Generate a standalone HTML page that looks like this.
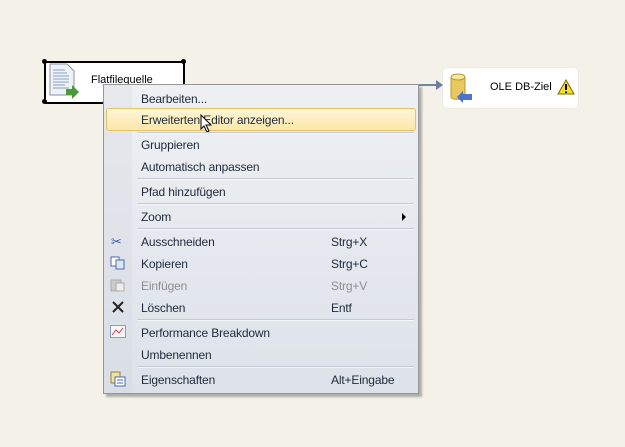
<!DOCTYPE html>
<html><head><style>
body{margin:0;width:625px;height:447px;background:#f4f1e9;position:relative;overflow:hidden;font-family:"Liberation Sans","DejaVu Sans",sans-serif;}
.box{position:absolute;background:#fff;border-radius:4px;}
.dot{position:absolute;width:5px;height:5px;border-radius:50%;background:#000;}
#menu{position:absolute;left:103px;top:84px;width:314px;height:308px;border:1px solid #979797;background:linear-gradient(#eef0f3,#dde2ea);box-shadow:3px 3px 2px rgba(0,0,0,0.28);}
#gut{position:absolute;left:0;top:0;width:28px;height:100%;background:linear-gradient(#e6e8ec,#d9dee6);}
.it{position:absolute;left:37px;font-size:12px;color:#1e2a3a;line-height:14px;letter-spacing:-0.15px;}
.sc{position:absolute;left:227px;font-size:12px;color:#1e2a3a;line-height:14px;letter-spacing:-0.15px;}
.sep{position:absolute;left:33px;width:277px;height:1px;background:#c5cad3;border-bottom:1px solid #f4f5f7;}
.ic{position:absolute;left:7px;font-size:13px;line-height:14px;}
</style></head><body>
<div class="box" style="left:44px;top:61px;width:137px;height:39px;border:2px solid #000;border-radius:2px;"></div>
<div class="dot" style="left:42px;top:59px"></div><div class="dot" style="left:181px;top:59px"></div>
<div class="dot" style="left:42px;top:99px"></div>
<svg style="position:absolute;left:48px;top:63px" width="36" height="36"><path d="M2 1h17l7 7v24H2z" fill="#eef1f6" stroke="#8a94a8"/><g stroke="#8aa0c0"><path d="M5 7h12M5 10h14M5 13h16M5 16h16M5 19h16M5 22h12M5 25h16"/></g><path d="M18 26h6v-4l7 7-7 7v-4h-6z" fill="#4a9a3a"/></svg>
<div style="position:absolute;left:91px;top:74px;font-size:11px;color:#000">Flatfilequelle</div>
<div style="position:absolute;left:418px;top:84px;width:20px;height:2px;background:#7185a0"></div>
<div style="position:absolute;left:436px;top:80px;border-left:7px solid #6a7fa0;border-top:5px solid transparent;border-bottom:5px solid transparent"></div>
<div class="box" style="left:443px;top:68px;width:135px;height:40px;box-shadow:0 0 1px #ccc;"></div>
<svg style="position:absolute;left:448px;top:71px" width="34" height="34"><path d="M3 6v20c0 3 14 3 14 0V6" fill="#e8c860" stroke="#b89a30"/><ellipse cx="10" cy="6" rx="7" ry="3" fill="#f6e6a0" stroke="#b89a30"/><path d="M9 26l6-6v3h9v6h-9v3z" fill="#4a74c8"/></svg>
<div style="position:absolute;left:490px;top:81px;font-size:11px;color:#000">OLE DB-Ziel</div>
<svg style="position:absolute;left:557px;top:79px" width="18" height="16"><path d="M9 1L17 15H1z" fill="#f5e020" stroke="#7a6a00"/><path d="M9 5v6M9 12.5v1.5" stroke="#000" stroke-width="2"/></svg>
<div id="menu"><div id="gut"></div>
<div class="it" style="top:7px">Bearbeiten...</div>
<div style="position:absolute;left:2px;top:23px;width:308px;height:21px;border:1px solid #e5c365;border-radius:3px;background:linear-gradient(#fff6d8,#fbe7a8)"></div>
<div class="it" style="top:28px">Erweiterten Editor anzeigen...</div>
<svg style="position:absolute;left:96px;top:29px" width="14" height="20"><path d="M1 1v14l3-3 3 6 2-1-3-6h5z" fill="#fff" stroke="#000"/></svg>
<div class="sep" style="top:47px"></div>
<div class="it" style="top:53px">Gruppieren</div>
<div class="it" style="top:75px">Automatisch anpassen</div>
<div class="sep" style="top:93px"></div>
<div class="it" style="top:100px">Pfad hinzufügen</div>
<div class="sep" style="top:118px"></div>
<div class="it" style="top:125px">Zoom</div>
<div style="position:absolute;left:298px;top:128px;border-left:4px solid #000;border-top:4px solid transparent;border-bottom:4px solid transparent"></div>
<div class="sep" style="top:143px"></div>
<div class="ic" style="top:150px;color:#3a5aa0">✂</div>
<div class="it" style="top:150px">Ausschneiden</div><div class="sc" style="top:150px">Strg+X</div>
<svg style="position:absolute;left:6px;top:171px" width="16" height="14"><rect x="1" y="1" width="8" height="9" fill="#fff" stroke="#4a6ab0"/><rect x="6" y="4" width="8" height="9" fill="#dde6f6" stroke="#4a6ab0"/></svg>
<div class="it" style="top:172px">Kopieren</div><div class="sc" style="top:172px">Strg+C</div>
<svg style="position:absolute;left:6px;top:193px" width="16" height="14"><rect x="1" y="2" width="10" height="11" fill="#ccc" stroke="#aaa"/><rect x="6" y="5" width="8" height="8" fill="#eee" stroke="#aaa"/></svg>
<div class="it" style="top:194px;color:#8d8d8d">Einfügen</div><div class="sc" style="top:194px;color:#8d8d8d">Strg+V</div>
<svg style="position:absolute;left:8px;top:216px" width="12" height="12"><path d="M1 1l10 10M11 1L1 11" stroke="#222" stroke-width="2"/></svg>
<div class="it" style="top:216px">Löschen</div><div class="sc" style="top:216px">Entf</div>
<div class="sep" style="top:234px"></div>
<svg style="position:absolute;left:6px;top:240px" width="16" height="13"><rect x="0.5" y="0.5" width="15" height="12" fill="#f4f6fa" stroke="#8aa0c0"/><path d="M2 10l4-5 3 3 4-5" stroke="#d04040" fill="none"/></svg>
<div class="it" style="top:241px">Performance Breakdown</div>
<div class="it" style="top:263px">Umbenennen</div>
<div class="sep" style="top:281px"></div>
<svg style="position:absolute;left:6px;top:286px" width="16" height="16"><rect x="1" y="1" width="9" height="11" fill="#f0e0a0" stroke="#9a8040"/><rect x="5" y="6" width="10" height="9" fill="#fff" stroke="#4a6ab0"/><path d="M7 9h6M7 12h6" stroke="#4a6ab0"/></svg>
<div class="it" style="top:288px">Eigenschaften</div><div class="sc" style="top:288px">Alt+Eingabe</div>
</div>
</body></html>
